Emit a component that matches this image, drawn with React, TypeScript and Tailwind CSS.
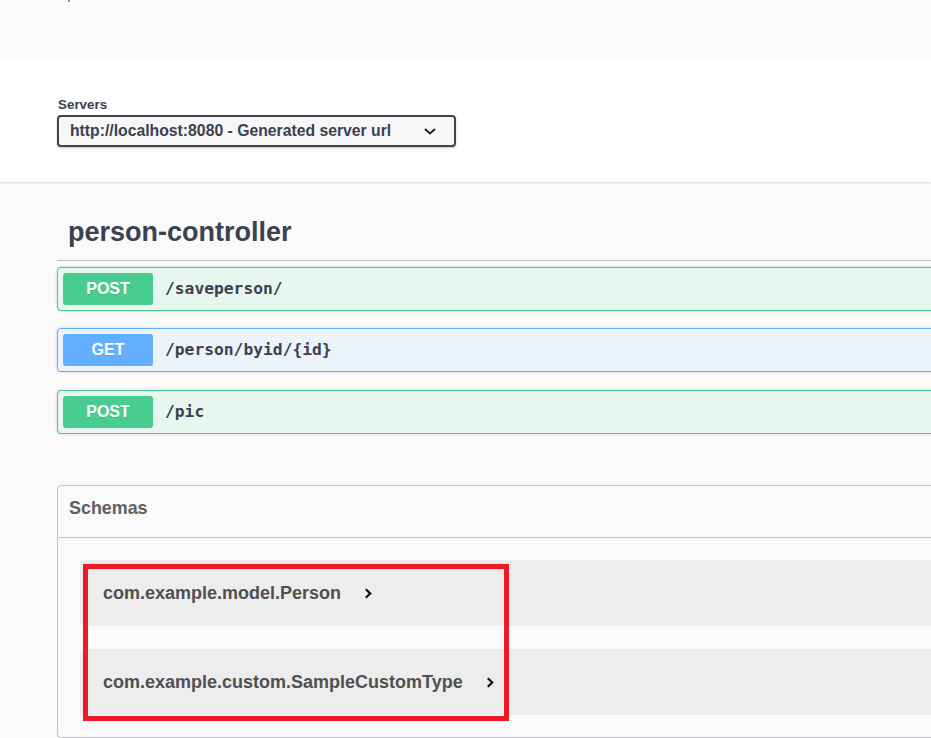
const sans = "font-['Liberation_Sans',Arial,sans-serif]";
const mono = "font-['DejaVu_Sans_Mono','Liberation_Mono',monospace]";

const operations = [
  { method: "POST", path: "/saveperson/", gap: "mt-0" },
  { method: "GET", path: "/person/byid/{id}", gap: "mt-[17px]" },
  { method: "POST", path: "/pic", gap: "mt-[18px]" },
];

const schemas = ["com.example.model.Person", "com.example.custom.SampleCustomType"];

function OpBlock({ method, path, gap }: { method: string; path: string; gap: string }) {
  const isGet = method === "GET";
  return (
    <div
      className={`${gap} flex h-[44px] items-center gap-[12px] rounded-[4px] border p-[5px] shadow-[0_0_3px_rgba(0,0,0,0.19)] ${
        isGet ? "border-[#61affe] bg-[#ebf3fb]" : "border-[#49cc90] bg-[#e7f6ef]"
      }`}
    >
      <div
        className={`flex h-[32px] w-[90px] items-center justify-center rounded-[3px] text-[16px] font-bold text-white [text-shadow:0_1px_0_rgba(0,0,0,0.1)] ${
          isGet ? "bg-[#61affe]" : "bg-[#49cc90]"
        }`}
      >
        {method}
      </div>
      <span className={`${mono} text-[16.3px] font-semibold text-[#3b4151]`}>{path}</span>
    </div>
  );
}

function Chevron() {
  return (
    <svg width="8" height="11" viewBox="0 0 8 11" className="ml-[23px] shrink-0">
      <path d="M1.8 1.2 L6.2 5.5 L1.8 9.8" fill="none" stroke="#111" strokeWidth="2.3" />
    </svg>
  );
}

export default function App() {
  return (
    <div className={`${sans} relative h-[738px] w-full overflow-hidden bg-[#fafafa] text-[#3b4151]`}>
      {/* top strip, only a sliver of the info link shows */}
      <div className="h-[60px]">
        <div className="ml-[68px] h-[2px] w-[2px] bg-[#8f80ee]" />
      </div>

      {/* servers bar */}
      <div className="h-[122px] bg-white pl-[57px] pt-[37px] shadow-[0_1px_2px_0_rgba(0,0,0,0.15)]">
        <div className="mb-[2px] ml-px text-[13.4px] font-bold leading-[16px]">Servers</div>
        <div className="flex h-[32px] w-[399px] items-center justify-between rounded-[4px] border-2 border-[#41444e] bg-[#f7f7f7] pl-[11px] pr-[18px] shadow-[0_1px_2px_0_rgba(0,0,0,0.25)]">
          <span className="text-[15.75px] font-bold text-[#3b4151]">
            http://localhost:8080 - Generated server url
          </span>
          <svg width="12" height="7" viewBox="0 0 12 7">
            <path d="M1 1 L6 5.5 L11 1" fill="none" stroke="#222" strokeWidth="2" />
          </svg>
        </div>
      </div>

      <div className="w-[1300px] pl-[57px] pt-[24px]">
        {/* tag section */}
        <h3 className="border-b border-[#3b4151]/30 pb-[12px] pl-[11px] pt-[10px] text-[27px] font-bold leading-[32px]">
          person-controller
        </h3>
        <div className="mt-[6px] flex flex-col">
          {operations.map((op) => (
            <OpBlock key={op.path} {...op} />
          ))}
        </div>

        {/* schemas */}
        <section className="mt-[51px] rounded-[4px] border border-[#3b4151]/30">
          <div className="h-[52px] border-b border-[#3b4151]/30 pl-[11px] pt-[12px] text-[17.9px] font-bold leading-[20px] text-[#606060]">
            Schemas
          </div>
          <div className="flex flex-col gap-[23px] px-[22px] py-[22px]">
            {schemas.map((name) => (
              <div key={name} className="flex h-[66px] items-center rounded-[4px] bg-[#ededed] pl-[23px]">
                <span className="text-[18px] font-bold text-[#505050]">{name}</span>
                <Chevron />
              </div>
            ))}
          </div>
        </section>
      </div>

      {/* red highlight drawn over the screenshot */}
      <div className="absolute left-[83px] top-[564px] h-[157px] w-[426px] border-[5px] border-[#ed1c24]" />
    </div>
  );
}
